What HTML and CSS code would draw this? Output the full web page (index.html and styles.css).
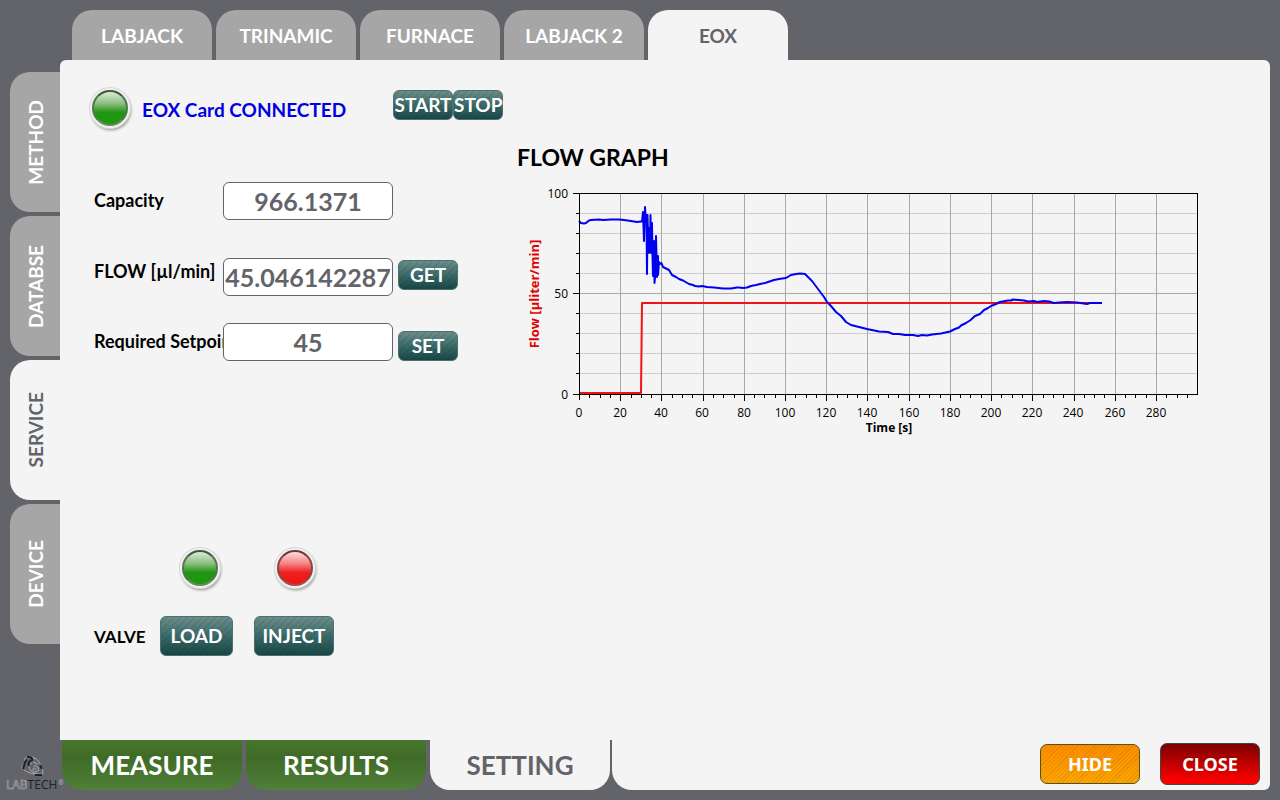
FILE: index.html
```html
<!DOCTYPE html>
<html lang="en">
<head>
<meta charset="utf-8">
<meta name="viewport" content="width=device-width, initial-scale=1">
<title>EOX service</title>
<link rel="stylesheet" href="styles.css">
</head>
<body>
<div class="app">
  <nav class="top-tabs" aria-label="Devices">
    <button type="button" class="tab">LABJACK</button>
    <button type="button" class="tab">TRINAMIC</button>
    <button type="button" class="tab">FURNACE</button>
    <button type="button" class="tab">LABJACK 2</button>
    <button type="button" class="tab tab-active">EOX</button>
  </nav>

  <nav class="side-tabs" aria-label="Sections">
    <button type="button" class="tab side"><span class="turned">METHOD</span></button>
    <button type="button" class="tab side"><span class="turned">DATABSE</span></button>
    <button type="button" class="tab side tab-active"><span class="turned">SERVICE</span></button>
    <button type="button" class="tab side"><span class="turned">DEVICE</span></button>
  </nav>

  <main class="panel">
    <div class="status">
      <span class="led led-green"></span>
      <span class="status-text">EOX Card CONNECTED</span>
      <div class="run-buttons">
        <button type="button" class="btn btn-start">START</button>
        <button type="button" class="btn btn-stop">STOP</button>
      </div>
    </div>

    <div class="columns">
      <section class="controls">
        <div class="field">
          <label for="capacity">Capacity</label>
          <input id="capacity" type="text" value="966.1371">
        </div>
        <div class="field field-flow">
          <label for="flow">FLOW [µl/min]</label>
          <input id="flow" type="text" value="45.046142287">
          <button type="button" class="btn btn-small">GET</button>
        </div>
        <div class="field field-setpoint">
          <label for="setpoint">Required Setpoint</label>
          <input id="setpoint" type="text" value="45">
          <button type="button" class="btn btn-small">SET</button>
        </div>
        <div class="valve">
          <span class="led led-green"></span>
          <span class="led led-red"></span>
          <span class="valve-label">VALVE</span>
          <button type="button" class="btn btn-load">LOAD</button>
          <button type="button" class="btn btn-inject">INJECT</button>
        </div>
      </section>

      <section class="graph">
        <h1>FLOW GRAPH</h1>
        <svg class="chart" viewBox="-62 -10 690 256" role="img" aria-label="Flow over time">
          <path class="grid-minor" d="M0 20H618M0 40H618M0 60H618M0 80H618M0 120H618M0 140H618M0 160H618M0 180H618"/>
          <path class="grid-major" d="M0 100H618M41 0V201M82 0V201M124 0V201M165 0V201M206 0V201M247 0V201M288 0V201M330 0V201M371 0V201M412 0V201M453 0V201M495 0V201M536 0V201M577 0V201"/>
          <path class="line-red" d="M0 200H62L63 110H523"/>
          <path class="line-blue" d="M0 28L2 30L5 30.500L7 30L10 27.500L12 27L20 26.500L24 27L32 26.500L40 26.500L45 27L52 28L58 29L62 28.500L63 28.500L64 19L65 48L66 14L67 29L67.500 22L68 81L68.500 22L69.500 60L70 35L71 59L71.500 22L72 60L73 30L73.500 63L74 83L75 48L75.500 90L76.500 80L77 43L78 84L79 63L79 82L80 69L81 71L82.500 70L84 74L90 77L93 82L97 84L100 86L104 87.500L110 91L114 92L116 93L120 93.500L123 93L128 94L135 94.500L144 95.500L152 95.500L158 94.500L160 94.500L164 95L168 94.500L172 93L177 92L181 91L186 90L195 87L200 86L207 85L212 82L217 81L221 80.500L226 81L228 83L233 88L239 96L245 104L248 109L252 113L257 119L262 123L267 129L272 132L278 133.500L288 136L300 138.500L309 139L314 141L320 141L326 142L334 142L339 143L343 142L348 142.500L353 141.500L362 140.500L371 138.500L376 136L380 134.500L382 132.500L387 130L391 127.500L396 123L401 121L405 117L409 115L412 113L417 111L421 109L429 107.500L432 107.500L434 106.500L445 107.500L449 108.500L455 108L458 109L465 108L470 108.500L475 110L480 109.500L488 109L498 109.500L508 111L511 110L518 110L523 110"/>
          <path class="axis" d="M-6 0H618V201M0 0V207M-6 201H619M-6 100H0M-3 20H0M-3 40H0M-3 60H0M-3 80H0M-3 120H0M-3 140H0M-3 160H0M-3 180H0M41 201V208M82 201V208M124 201V208M165 201V208M206 201V208M247 201V208M288 201V208M330 201V208M371 201V208M412 201V208M453 201V208M495 201V208M536 201V208M577 201V208M10 201V205M21 201V205M31 201V205M52 201V205M62 201V205M72 201V205M93 201V205M103 201V205M113 201V205M134 201V205M144 201V205M155 201V205M175 201V205M185 201V205M196 201V205M216 201V205M227 201V205M237 201V205M258 201V205M268 201V205M278 201V205M299 201V205M309 201V205M319 201V205M340 201V205M350 201V205M361 201V205M381 201V205M391 201V205M402 201V205M422 201V205M433 201V205M443 201V205M464 201V205M474 201V205M484 201V205M505 201V205M515 201V205M525 201V205M546 201V205M556 201V205M567 201V205M587 201V205M598 201V205M608 201V205"/>
          <g class="labels-y">
            <text x="-11" y="5">100</text><text x="-11" y="105">50</text><text x="-11" y="206">0</text>
          </g>
          <g class="labels-x">
            <text x="0" y="224">0</text><text x="41" y="224">20</text><text x="82" y="224">40</text><text x="123" y="224">60</text><text x="165" y="224">80</text><text x="206" y="224">100</text><text x="247" y="224">120</text><text x="288" y="224">140</text><text x="330" y="224">160</text><text x="371" y="224">180</text><text x="412" y="224">200</text><text x="453" y="224">220</text><text x="494" y="224">240</text><text x="536" y="224">260</text><text x="577" y="224">280</text>
          </g>
          <text class="title-x" x="310" y="239">Time [s]</text>
          <text class="title-y" transform="translate(-40 101) rotate(-90)">Flow [µliter/min]</text>
        </svg>
      </section>
    </div>
  </main>

  <div class="brand">
    <svg class="logo" viewBox="0 0 64 40" role="img" aria-label="Labtech">
      <path d="M27 6C24 8 25 12 23 15C21 16 22 19 23 20M29 6C34 7 39 10 40 14C42 17 43 20 43 24H36C31 24 27 22 24 20M32 13C29 14 28 18 31 21C33 23 36 24 38 24M34 16C37 15 40 18 38 21C35 23 32 21 33 19C34 17 36 18 36 20M29 6L35 9M33 12L38 14" fill="none" stroke="#a9abad" stroke-width="1"/>
      <path d="M27 7C30 6 33 8 32 10C29 11 28 13 29 16M27 10C24 11 25 14 23 19M35 25H42M40 15L42 19" fill="none" stroke="#202124" stroke-width="2"/>
      <text class="logo-word" x="6" y="39"><tspan class="logo-lab">LAB</tspan><tspan class="logo-tech">TECH</tspan></text>
      <text class="logo-mark" x="58" y="35">®</text>
    </svg>
  </div>

  <footer class="bottom">
    <nav class="bottom-tabs" aria-label="Main">
      <button type="button" class="main-tab">MEASURE</button>
      <button type="button" class="main-tab">RESULTS</button>
      <button type="button" class="main-tab main-active">SETTING</button>
    </nav>
    <div class="actions">
      <button type="button" class="action hide">HIDE</button>
      <button type="button" class="action close">CLOSE</button>
    </div>
  </footer>
</div>
</body>
</html>
```
FILE: styles.css
```css
* {
  box-sizing: border-box;
}

body {
  margin: 0;
  background: #636469;
  color: #000;
  font-family: Lato, "Liberation Sans", sans-serif;
  font-weight: 700;
}

button,
input {
  margin: 0;
  padding: 0;
  font: inherit;
}

button {
  border: 0;
  white-space: nowrap;
  cursor: pointer;
}

.app {
  display: grid;
  grid-template-columns: 60px 1fr;
  grid-template-rows: 60px 1fr 60px;
  min-height: 100vh;
  padding-right: 10px;
}

/* Tabs */
.top-tabs {
  grid-column: 1 / -1;
  display: flex;
  gap: 4px;
  padding: 10px 0 0 72px;
}

.tab {
  width: 140px;
  height: 50px;
  border-radius: 20px 20px 0 0;
  background: #a6a6a6;
  color: #fff;
  font-size: 19px;
}

.side-tabs {
  display: flex;
  flex-direction: column;
  align-items: flex-end;
  gap: 4px;
  padding-top: 12px;
}

.side {
  display: flex;
  align-items: center;
  justify-content: center;
  width: 50px;
  height: 140px;
  border-radius: 20px 0 0 20px;
}

.turned {
  writing-mode: vertical-rl;
  transform: rotate(180deg);
}

.tab-active {
  background: #f4f4f4;
  color: #636469;
}

/* Main panel */
.panel {
  padding: 26px 63px 24px 28px;
  border-radius: 6px 6px 0 0;
  background: #f4f4f4;
}

.status {
  display: flex;
  align-items: center;
  height: 44px;
}

.status-text {
  width: 251px;
  padding: 3px 0 0 10px;
  color: #0000e0;
  font-size: 19px;
  white-space: nowrap;
}

.status .led {
  flex: none;
}

.run-buttons {
  display: flex;
  margin: 0 0 6px 10px;
}

/* Glossy lamp: coloured dome, dark rim, pale bezel with a soft shadow */
.led {
  width: 36px;
  height: 36px;
  margin: 4px;
  border: 2px solid #5c6b59;
  border-radius: 50%;
  box-shadow: 0 0 0 2px #f0f0f0, 0 0 0 3px #d8d8d8, 1px 2px 3px 2px #909090;
}

.led-green {
  border-color: #3f5a3a #4f7a48 #5f8f57;
  background: linear-gradient(#dcebd7, #8dbd80 36%, #219513 64%, #1c9a0c);
}

.led-red {
  border-color: #6b3a3a #8a4444 #a34c4c;
  background: linear-gradient(#fbdcdc, #f58484 36%, #ee2020 64%, #f01414);
}

.btn {
  height: 30px;
  border: 1px solid #4d706e;
  border-radius: 6px;
  background:
    repeating-linear-gradient(135deg, transparent 0 3px, rgb(0 40 40 / 9%) 3px 5px),
    linear-gradient(#6b8e8c, #336361 60%, #194745);
  color: #fff;
  font-size: 19px;
  line-height: 28px;
}

.btn-start,
.btn-small {
  width: 60px;
}

.btn-stop {
  width: 50px;
}

.columns {
  display: grid;
  grid-template-columns: 429px 1fr;
  padding-top: 13px;
}

.controls {
  padding: 39px 0 0 6px;
}

.field {
  display: grid;
  grid-template-columns: 129px 170px 60px;
  align-items: center;
  font-size: 18px;
}

.field label {
  overflow: hidden;
  padding-bottom: 3px;
  white-space: nowrap;
}

.field input {
  width: 170px;
  height: 38px;
  border: 1px solid #636469;
  border-radius: 6px;
  background: #fff;
  color: #636469;
  font-size: 25px;
  text-align: center;
}

.field .btn {
  margin-left: 5px;
}

.field-flow {
  margin-top: 38px;
}

.field-flow label {
  padding-bottom: 12px;
}

.field-flow .btn {
  margin-bottom: 4px;
}

.field-setpoint {
  margin-top: 27px;
}

.field-setpoint .btn {
  align-self: end;
}

.valve {
  display: grid;
  grid-template-columns: 66px 73px 101px;
  row-gap: 26px;
  align-items: center;
  margin-top: 185px;
}

.valve .led-green {
  grid-column: 2;
  margin-left: 22px;
}

.valve .led-red {
  margin-left: 44px;
}

.valve-label {
  font-size: 17px;
}

.btn-load,
.btn-inject {
  height: 40px;
  line-height: 38px;
}

.btn-inject {
  width: 80px;
  margin-left: 21px;
}

/* Chart */
.graph h1 {
  margin: 0;
  font-size: 23px;
  line-height: 28px;
}

.chart {
  display: block;
  width: 100%;
  margin-top: 12px;
  font-family: "Open Sans", "Noto Sans", sans-serif;
  font-size: 12px;
  font-weight: 400;
}

.grid-minor,
.grid-major,
.axis {
  fill: none;
  stroke-width: 1;
  shape-rendering: crispEdges;
}

.grid-minor {
  stroke: #cdcdcd;
}

.grid-major {
  stroke: #a8a8a8;
}

.axis {
  stroke: #000;
}

.line-red,
.line-blue {
  fill: none;
  stroke-width: 2;
  stroke-linejoin: round;
}

.line-red {
  stroke: #f01414;
}

.line-blue {
  stroke: #0000f0;
}

.labels-y {
  text-anchor: end;
}

.labels-x,
.title-x,
.title-y {
  text-anchor: middle;
}

.title-x,
.title-y {
  font-weight: 700;
}

.title-y {
  fill: #e00000;
  font-size: 13px;
}

/* Bottom bar */
.brand {
  padding-top: 10px;
}

.logo {
  display: block;
  width: 64px;
  overflow: visible;
  font-family: "Open Sans", sans-serif;
  font-weight: 400;
}

.logo-word {
  font-size: 12px;
}

.logo-lab {
  fill: #636469;
  stroke: #a9abad;
  stroke-width: 0.5;
}

.logo-tech {
  fill: #202124;
}

.logo-mark {
  fill: #b4b4b8;
  font-size: 7px;
}

.bottom {
  display: flex;
  height: 50px;
}

.bottom-tabs {
  display: flex;
  gap: 4px;
  padding: 0 2px;
}

.main-tab {
  width: 180px;
  height: 50px;
  border-radius: 0 0 20px 20px;
  background: linear-gradient(#47762d, #3f6b27 35%, #508039);
  color: #fff;
  font-size: 26px;
}

.main-active {
  background: #f4f4f4;
  color: #636469;
}

.actions {
  display: flex;
  flex: 1;
  align-items: center;
  justify-content: flex-end;
  gap: 20px;
  padding-right: 10px;
  border-radius: 0 0 6px 20px;
  background: #f4f4f4;
}

.action {
  width: 100px;
  height: 40px;
  margin-bottom: 2px;
  border: 1px solid #52521c;
  border-radius: 7px;
  color: #fff;
  font-family: "Noto Sans", sans-serif;
  font-size: 18px;
}

.hide {
  background:
    repeating-linear-gradient(135deg, transparent 0 2px, rgb(120 90 0 / 18%) 2px 3px),
    linear-gradient(#ff8c00, #ffa500);
}

.close {
  height: 42px;
  border-color: #444448;
  background:
    repeating-linear-gradient(135deg, transparent 0 2px, rgb(0 0 0 / 8%) 2px 3px),
    linear-gradient(#800000, #ff0000 90%);
}
```
